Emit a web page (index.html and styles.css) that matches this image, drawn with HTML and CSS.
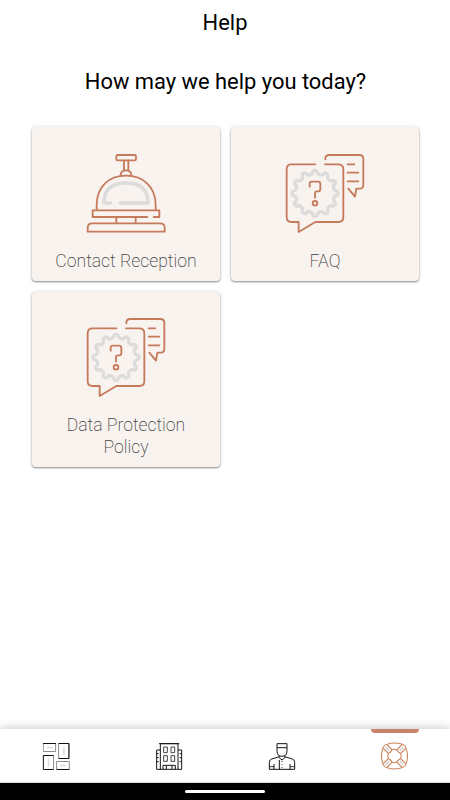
FILE: index.html
```html
<!DOCTYPE html>
<html lang="en">
<head>
<meta charset="utf-8">
<meta name="viewport" content="width=device-width">
<title>Help</title>
<link rel="stylesheet" href="styles.css">
</head>
<body>
<svg class="defs" aria-hidden="true">
  <defs>
    <path id="lobe" d="M-7.5-62C-6-71.5 6-71.5 7.5-62C8.5-56 20-53 24.5-57.4"/>
    <g id="lobes"><use href="#lobe"/><use href="#lobe" transform="rotate(30)"/><use href="#lobe" transform="rotate(60)"/></g>
    <symbol id="faq" viewBox="0 0 330 300">
      <g transform="translate(135 160)" fill="none" stroke="#dcdcdc" stroke-width="10" stroke-linecap="round">
        <use href="#lobes"/><use href="#lobes" transform="rotate(90)"/><use href="#lobes" transform="rotate(180)"/><use href="#lobes" transform="rotate(270)"/>
      </g>
      <g fill="none" stroke="#c67a5c" stroke-width="5.5" stroke-linejoin="round" stroke-linecap="round">
        <path d="M136 73H64Q50 73 50 88V231Q50 246 64 246H86V276L136 246H205Q220 246 220 231V88Q220 73 205 73H165"/>
        <path d="M166 58V56Q166 45 178 45H268Q280 45 280 57V134Q280 146 268 146H259L255 170L235 146"/>
        <path d="M233 73H253M233 98H265M233 124H265"/>
        <path d="M119 140V131Q119 125 125 125H144Q151 125 151 132V148Q151 154 145 154H141Q135 154 135 160V173"/>
        <circle cx="135" cy="190" r="7"/>
      </g>
    </symbol>
  </defs>
</svg>
<header class="title">Help</header>
<main>
  <h1>How may we help you today?</h1>
  <div class="cards">
    <a class="card">
      <svg class="art bell" viewBox="0 0 330 300" fill="none" stroke-linecap="round" stroke-linejoin="round">
        <path d="M121 189H102Q102 129 168 129Q234 129 234 189H151" stroke="#dcdcdc" stroke-width="11"/>
        <g stroke="#c67a5c" stroke-width="5.5">
          <rect x="139" y="45" width="59" height="16" rx="4"/>
          <path d="M162 61V91M175 61V91M152 106Q152 91 168 91Q184 91 184 106"/>
          <path d="M80 210V195C80 139 118 107 168 107S257 139 257 195V210"/>
          <path d="M232 231H68V211H268V231H251M139 231V249M197 231V249"/>
          <path d="M53 275V263Q53 250 68 250H269Q284 250 284 263V275Z"/>
        </g>
      </svg>
      <span>Contact Reception</span>
    </a>
    <a class="card">
      <svg class="art"><use href="#faq"/></svg>
      <span>FAQ</span>
    </a>
    <a class="card">
      <svg class="art"><use href="#faq"/></svg>
      <span>Data Protection Policy</span>
    </a>
  </div>
</main>
<nav>
  <a class="tab dashboard">
    <svg viewBox="0 0 84 84" fill="none" stroke-width="3">
      <path d="M2 3H39V27H2ZM48 3H79V48H48ZM2 39H33V81H2ZM42 57H80V81H42Z" stroke="#8c8c8c"/>
      <path d="M1 3H40M48 3H79V48H48M33 39H2V81H33M42 81H80" stroke="#111"/>
      <path d="M12 15H30M64 14V38M18 49V72M53 69H70" stroke="#ddd" stroke-width="5"/>
    </svg>
  </a>
  <a class="tab">
    <svg viewBox="0 0 84 84" fill="none" stroke="#151515" stroke-width="3">
      <path d="M16 82V5H69V82M12 5H73M16 24H5V82H80V24H69M24 82V70H61V82M34 70V82M51 70V82"/>
      <path d="M26 15H37V32H26ZM48 15H59V32H48ZM26 41H37V58H26ZM48 41H59V58H48Z" stroke="#444"/>
      <path d="M5 35H11M5 47H11M5 59H11M74 35H80M74 47H80M74 59H80"/>
    </svg>
  </a>
  <a class="tab concierge">
    <svg viewBox="0 0 84 84" fill="none" stroke="#151515" stroke-width="3" stroke-linejoin="round">
      <path d="M27 17V5H57V17ZM27 17V26Q27 43 42 43Q57 43 57 26V17"/>
      <path d="M34 41V44L11 51Q4 53 4 61V82H80V61Q80 53 73 51L50 44V41M18 66V82M66 66V82M31 45L42 54L53 45M34 54V82"/>
      <path d="M42 57V60M42 66V69M42 75V78M4 74H18M66 74H80" stroke-width="2.5"/>
    </svg>
  </a>
  <a class="tab active">
    <svg viewBox="0 0 84 84" fill="none" stroke="#c67a50" stroke-width="3">
      <path d="M42 3Q55 3 66 7Q76 9 77 19Q81 30 81 42Q81 54 77 65Q75 75 65 77Q54 81 42 81Q30 81 19 77Q9 75 7 65Q3 54 3 42Q3 30 7 19Q9 9 19 7Q29 3 42 3Z"/>
      <circle cx="42" cy="42" r="20"/>
      <g id="strap" transform="rotate(45 42 42)"><path d="M34 2V20Q34 25 39 25H45Q50 25 50 20V2" fill="#fff"/><path d="M42 4V20" stroke="#ddd" stroke-width="7"/></g>
      <use href="#strap" transform="rotate(90 42 42)"/><use href="#strap" transform="rotate(180 42 42)"/><use href="#strap" transform="rotate(270 42 42)"/>
    </svg>
  </a>
</nav>
<footer><i></i></footer>
</body>
</html>
```

FILE: styles.css
```css
* { box-sizing: border-box; }
body {
  margin: 0;
  height: 800px;
  display: flex;
  flex-direction: column;
  overflow: hidden;
  background: #fff;
  color: #000;
  font-family: Roboto, "Liberation Sans", sans-serif;
}
.defs { position: absolute; width: 0; height: 0; }
.title {
  height: 45px;
  padding-top: 1px;
  line-height: 44px;
  text-align: center;
  font-size: 21.9px;
}
main { flex: 1; padding: 0 31px 0 32px; }
h1 {
  margin: 22px 0 30px;
  line-height: 30px;
  font-size: 21.9px;
  font-weight: 400;
  text-align: center;
  white-space: nowrap;
}
.cards {
  display: grid;
  grid-template-columns: 188px 188px;
  gap: 10.5px 11px;
}
.card {
  display: flex;
  flex-direction: column;
  align-items: center;
  padding: 13px 20px 9.5px;
  border-radius: 4px;
  background: #f8f3ef;
  box-shadow: 0 1px 2px rgba(0, 0, 0, .42), 0 0 4px rgba(0, 0, 0, .12);
}
.card:nth-child(n+3) { padding: 12px 20px 8.5px; }
.art { width: 110px; height: 100px; }
.bell { margin-left: -2px; }
.card span {
  margin-top: 9.5px;
  font-size: 17.6px;
  line-height: 22px;
  font-weight: 200;
  text-align: center;
  color: #444;
}
.card:nth-child(n+3) span { margin-top: 10.5px; }
nav {
  height: 54px;
  display: grid;
  grid-template-columns: repeat(4, 1fr);
  border-bottom: 1px solid #ddd;
  box-shadow: 0 -1px 9px rgba(0, 0, 0, .22);
}
.tab {
  position: relative;
  display: flex;
  align-items: center;
  justify-content: center;
}
.tab svg { width: 28px; height: 28px; }
.dashboard svg { transform: translate(.6px, .5px); }
.concierge svg { transform: translateX(1px); }
.active svg { transform: translateX(.5px); }
.active::before {
  content: "";
  position: absolute;
  top: 0;
  left: 33px;
  width: 48px;
  height: 4px;
  border-radius: 0 0 4px 4px;
  background: #c9836a;
}
footer {
  height: 17px;
  display: flex;
  align-items: center;
  justify-content: center;
  background: #000;
}
footer i { width: 80px; height: 3px; border-radius: 2px; background: #fff; }
```
